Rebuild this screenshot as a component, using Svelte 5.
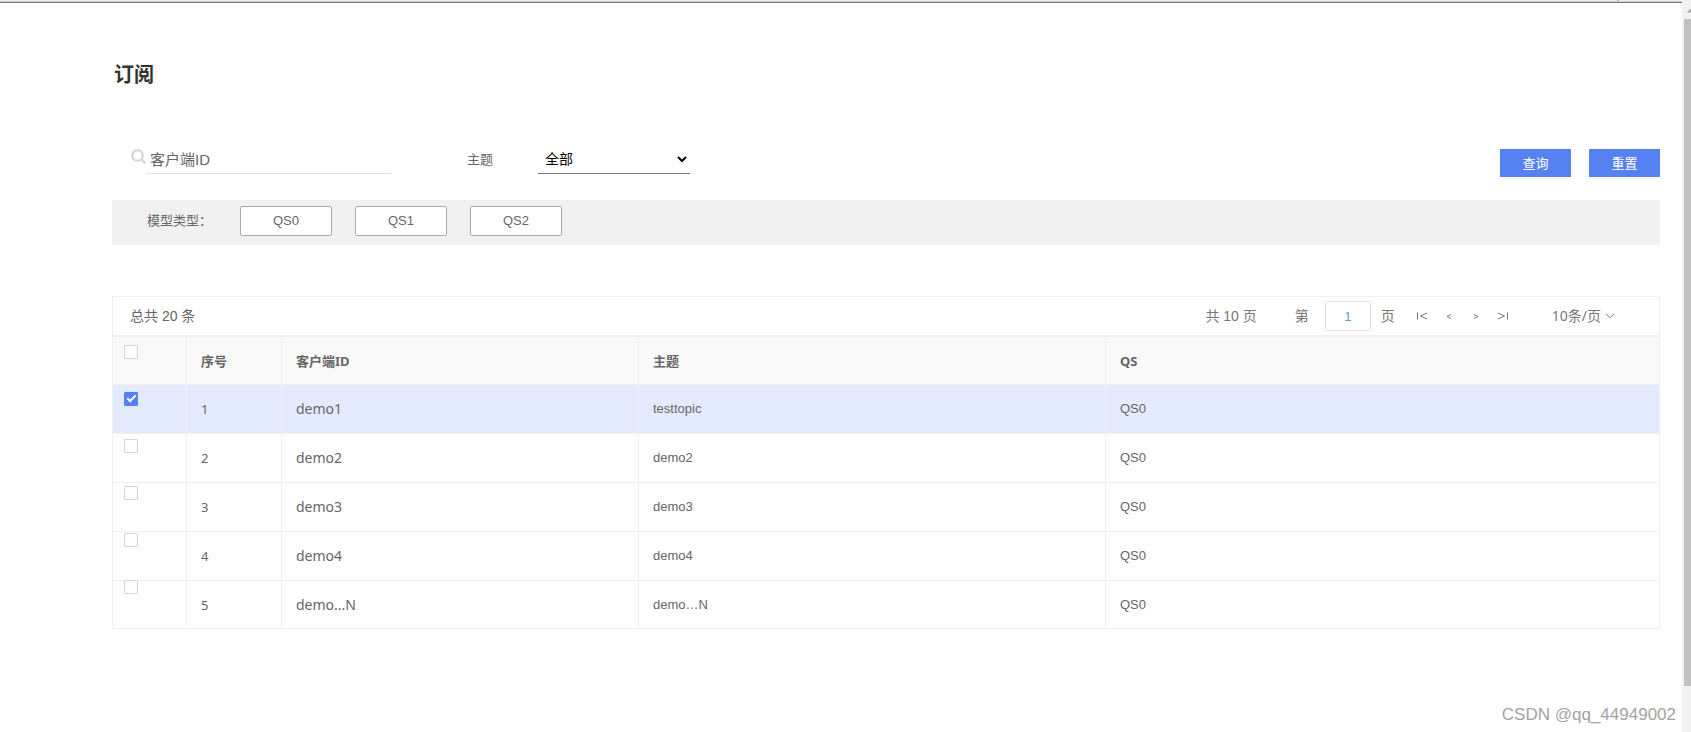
<script lang="ts">
  let clientId = $state("");
  let topic = $state("all");
  let page = $state("1");
  let rows = $state([
    { id: 1, client: "demo1", topic: "testtopic", qs: "QS0", checked: true },
    { id: 2, client: "demo2", topic: "demo2", qs: "QS0", checked: false },
    { id: 3, client: "demo3", topic: "demo3", qs: "QS0", checked: false },
    { id: 4, client: "demo4", topic: "demo4", qs: "QS0", checked: false },
    { id: 5, client: "demo...N", topic: "demo…N", qs: "QS0", checked: false },
  ]);

  const models = ["QS0", "QS1", "QS2"];
  const allChecked = $derived(rows.every((row) => row.checked));

  function toggleAll(checked: boolean) {
    for (const row of rows) row.checked = checked;
  }

  function reset() {
    clientId = "";
    topic = "all";
  }
</script>

<div class="window">
  <div class="frame-edge"><span class="frame-tick"></span></div>
  <main class="page">
    <h1>订阅</h1>

    <form class="search" onsubmit={(event) => event.preventDefault()}>
      <label class="search-icon" for="client-id" aria-label="客户端ID">
        <svg viewBox="0 0 15 15" width="15" height="15">
          <circle cx="6.5" cy="6.5" r="5.3" />
          <path d="M10.2 10.2L14.3 14.3" />
        </svg>
      </label>
      <input id="client-id" class="client" placeholder="客户端ID" bind:value={clientId} />
      <label class="topic-label" for="topic">主题</label>
      <select id="topic" bind:value={topic}>
        <option value="all">全部</option>
      </select>
      <div class="actions">
        <button type="submit">查询</button>
        <button type="button" onclick={reset}>重置</button>
      </div>
    </form>

    <div class="models">
      <span class="models-label">模型类型：</span>
      {#each models as model (model)}
        <button type="button">{model}</button>
      {/each}
    </div>

    <section class="list">
      <div class="toolbar">
        <span class="total">总共 20 条</span>
        <span class="pages">共 10 页</span>
        <label for="page">第</label>
        <input id="page" bind:value={page} />
        <span>页</span>
        <div class="pager">
          <button type="button" aria-label="首页">
            <svg viewBox="0 0 12 10" width="12" height="10"><path d="M1.5 1.5V8.5M11 2L4.5 5L11 8" /></svg>
          </button>
          <button type="button" aria-label="上一页">
            <svg viewBox="0 0 12 10" width="12" height="10"><path d="M8 3.5L4 5.5L8 7.5" /></svg>
          </button>
          <button type="button" aria-label="下一页">
            <svg viewBox="0 0 12 10" width="12" height="10"><path d="M4 3.5L8 5.5L4 7.5" /></svg>
          </button>
          <button type="button" aria-label="末页">
            <svg viewBox="0 0 12 10" width="12" height="10"><path d="M1 2L7.5 5L1 8M10.5 1.5V8.5" /></svg>
          </button>
        </div>
        <button type="button" class="page-size">
          10条/页
          <svg viewBox="0 0 10 6" width="10" height="6"><path d="M1 0.8L5 4.8L9 0.8" /></svg>
        </button>
      </div>

      <div class="table-wrap">
        <table>
          <colgroup>
            <col class="col-check" />
            <col class="col-index" />
            <col class="col-client" />
            <col class="col-topic" />
            <col />
          </colgroup>
          <thead>
            <tr><th></th><th>序号</th><th>客户端ID</th><th>主题</th><th>QS</th></tr>
          </thead>
          <tbody>
            {#each rows as row (row.id)}
              <tr class:selected={row.checked}>
                <td></td>
                <td class="index-cell">{row.id}</td>
                <td class="client-cell">{row.client}</td>
                <td>{row.topic}</td>
                <td>{row.qs}</td>
              </tr>
            {/each}
          </tbody>
        </table>
        <!-- selection boxes float over the first column -->
        <div class="checks">
          <input
            type="checkbox"
            aria-label="全选"
            checked={allChecked}
            onchange={(event) => toggleAll(event.currentTarget.checked)}
          />
          {#each rows as row (row.id)}
            <input type="checkbox" aria-label={row.client} bind:checked={row.checked} />
          {/each}
        </div>
      </div>
    </section>
  </main>
  <div class="scrollbar">
    <svg viewBox="0 0 9 16" width="9" height="16"><path d="M9 5.5V9.5H5Z" /></svg>
    <div class="thumb"></div>
  </div>
  <span class="watermark">CSDN @qq_44949002</span>
</div>

<style>
  :global(body) { background: #fff; }
  .window {
    --ui: "Noto Sans", "Noto Sans CJK SC", sans-serif;
    --line: #f0f0f0;
    position: relative;
    display: grid;
    grid-template-columns: 1fr 9px;
    grid-template-rows: 3px 1fr;
    min-height: 100vh;
    color: #666;
    font: 13px/20px "Liberation Sans", "Noto Sans CJK SC", sans-serif;
  }
  button, input, select {
    box-sizing: border-box;
    margin: 0;
    font: inherit;
    color: inherit;
  }
  button { padding: 0; cursor: pointer; }
  svg { display: block; fill: none; stroke: currentColor; }

  .frame-edge {
    display: flex;
    justify-content: flex-end;
    box-sizing: border-box;
    border-bottom: 1px solid #777;
    background: linear-gradient(#f1f1f1 50%, #ccc 50%);
  }
  .frame-tick { width: 2px; height: 1px; margin-right: 63px; background: #bbb; }
  .scrollbar {
    grid-column: 2;
    grid-row: 1 / 3;
    display: flex;
    flex-direction: column;
    padding: 3px 0 46px;
    background: #f1f1f1;
  }
  .scrollbar path { fill: #a3a3a3; stroke: none; }
  .thumb { flex: 1; margin-left: 2px; background: #c1c1c1; }

  .page { min-width: 0; padding: 57px 22px 40px 112px; }
  h1 { margin: 0 0 0 2px; color: #333; font-size: 20px; line-height: 30px; }

  .search { display: flex; align-items: flex-end; margin-top: 56px; height: 31px; }
  .search-icon { align-self: flex-start; margin: 3px 0 0 19px; color: #d8d8d8; }
  .search-icon path, .search-icon circle { stroke-width: 2.4; }
  .client {
    width: 245px;
    height: 28px;
    margin-bottom: 3px;
    padding: 0 4px;
    border: 0;
    border-bottom: 1px solid #e2e2e2;
    background: transparent;
    font-size: 15px;
  }
  .client::placeholder { color: #666; opacity: 1; }
  .topic-label { width: 71px; margin: 0 0 7px 76px; }
  select {
    width: 152px;
    height: 30px;
    margin-bottom: 3px;
    padding: 0 3px;
    border: 0;
    border-bottom: 1px solid #777;
    border-radius: 0;
    background: #fff;
    color: #000;
    font-size: 14px;
  }
  .actions { display: flex; gap: 18px; margin-left: auto; }
  .actions button {
    width: 71px;
    height: 28px;
    padding-top: 2px;
    border: 0;
    background: #5581f3;
    color: #fff;
  }

  .models {
    display: flex;
    align-items: center;
    gap: 23px;
    height: 45px;
    box-sizing: border-box;
    margin-top: 23px;
    padding: 0 0 3px 35px;
    border-radius: 2px;
    background: #f1f1f1;
  }
  .models-label { width: 70px; }
  .models button {
    width: 92px;
    height: 30px;
    border: 1px solid #aaa;
    border-radius: 2px;
    background: #fff;
  }

  .list { margin-top: 51px; border: 1px solid var(--line); border-bottom: 0; border-right: 0; }
  .toolbar {
    display: flex;
    align-items: center;
    height: 38px;
    padding: 0 44px 0 17px;
    border-right: 1px solid var(--line);
    border-bottom: 2px solid var(--line);
    color: #777;
    font-size: 14px;
  }
  .total { margin-right: auto; color: #666; }
  .pages { margin-right: 38px; }
  .toolbar input {
    width: 46px;
    height: 30px;
    margin: 0 10px 0 16px;
    padding: 0;
    border: 1px solid #e2e2e2;
    border-radius: 2px;
    background: #fff;
    color: #5b9bd5;
    font-size: 13px;
    text-align: center;
  }
  .toolbar button { border: 0; background: transparent; }
  .pager { display: flex; gap: 15px; margin: 0 43px 0 21px; }
  .page-size { display: flex; align-items: center; gap: 4px; font-family: var(--ui); }

  .table-wrap { position: relative; }
  table { width: 100%; table-layout: fixed; border-collapse: separate; border-spacing: 0; }
  .col-check { width: 74px; }
  .col-index { width: 95px; }
  .col-client { width: 357px; }
  .col-topic { width: 467px; }
  th, td {
    box-sizing: border-box;
    height: 49px;
    padding: 0 14px;
    border-right: 1px solid var(--line);
    border-bottom: 1px solid var(--line);
    text-align: left;
  }
  th { height: 48px; background: #f9f9f9; font-family: var(--ui); }
  tr:last-child td { height: 48px; }
  .index-cell, .client-cell { font-family: var(--ui); }
  .client-cell { font-size: 14px; }
  .selected td { background: #e5ebfe; }

  .checks {
    position: absolute;
    top: 8px;
    left: 11px;
    display: flex;
    flex-direction: column;
    gap: 33px;
  }
  .checks input {
    appearance: none;
    width: 14px;
    height: 14px;
    border: 1px solid #d5d5d5;
    border-radius: 1px;
    background: #fff;
    cursor: pointer;
  }
  .checks input:checked {
    display: grid;
    place-items: center;
    border-color: #5581f3;
    background: #5581f3;
  }
  .checks input:checked::before {
    content: "";
    width: 7px;
    height: 3px;
    margin-bottom: 3px;
    border: solid #fff;
    border-width: 0 0 2px 2px;
    transform: rotate(-45deg);
  }

  .watermark {
    position: absolute;
    right: 15px;
    bottom: 7px;
    color: #a3a3a3;
    font-size: 17px;
  }
</style>
